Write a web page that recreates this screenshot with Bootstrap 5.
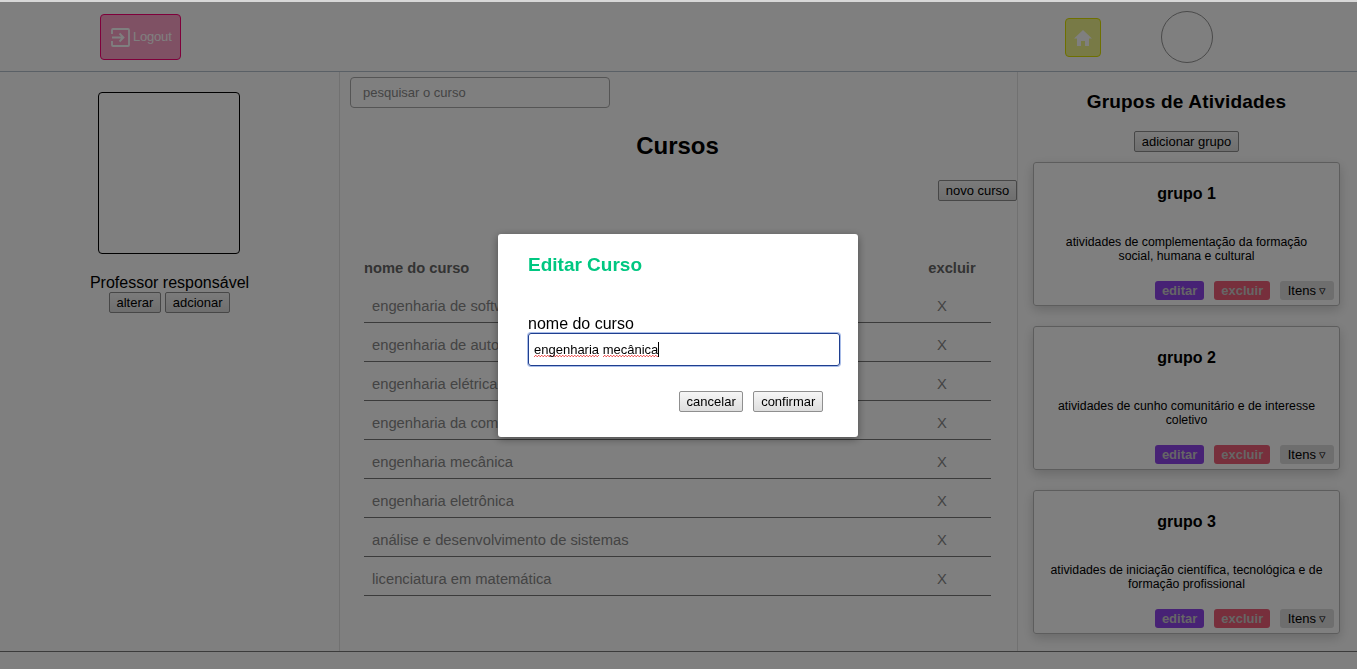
<!DOCTYPE html>
<html lang="pt-BR">
<head>
    <meta charset="UTF-8">
    <title>Cursos</title>
    <link href="https://cdn.jsdelivr.net/npm/bootstrap@5.3.2/dist/css/bootstrap.min.css" rel="stylesheet">
    <style>
        html, body { height: 100%; overflow: hidden; }
        body { font-family: "Liberation Sans", Arial, sans-serif; font-size: 16px; color: #000; background: #fff; }
        .top-edge { position: fixed; top: 0; left: 0; right: 0; height: 2px; background: #d8d8d8; z-index: 1060; }
        .page-top { height: 72px; padding-top: 2px; border-bottom: 1px solid #b4c0cc; }
        .logout-btn { margin: 12px 0 0 100px; width: 81px; height: 46px; border: 1px solid #ff0077; border-radius: 4px; background: #ffa3c8; color: #fff; font-size: 13px; letter-spacing: -.2px; padding: 0 0 0 10px; gap: 3px; }
        .home-btn { margin: 16px 0 0 884px; width: 36px; height: 39px; border: 1px solid #dde000; border-radius: 4px; background: #f0f48c; padding: 0; }
        .avatar-round { margin: 9px 0 0 60px; width: 52px; height: 52px; border: 1px solid #949494; border-radius: 50%; }
        .page-main { height: 579px; }
        .side-left { width: 340px; border-right: 1px solid #e2e2e2; padding-top: 20px; }
        .photo-box { width: 142px; height: 162px; border: 1px solid #000; border-radius: 4px; margin: 0 1px 20px 0; }
        .prof-name { line-height: 18px; }
        .plain-btn { font-family: "Liberation Sans", Arial, sans-serif; font-size: 13px; line-height: 15px; padding: 2px 6.7px; color: #000; border: 1px solid #8f8f8f; border-radius: 2px; background: linear-gradient(#f6f6f6, #dedede); }
        .center-col { width: 677px; padding: 5px 0 0 10px; }
        .search-box { width: 260px; height: 31px; font-size: 13px; border: 1px solid #aaa; border-radius: 4px; padding: 0 12px; color: #777; }
        .search-box::placeholder { color: #888; opacity: 1; }
        .page-title { font-size: 24px; font-weight: 700; line-height: 28px; text-align: center; margin: 24px 0 20px -12px; }
        .course-table { width: 627px; margin: 47px 0 0 14px; font-size: 14.75px; color: #888; }
        .course-table th { font-weight: 700; color: #666; font-size: 14.7px; height: 35px; border: 0; padding: 6px 0 0; vertical-align: middle; background: none; }
        .course-table td { height: 39px; padding: 8px 0 0 8px; border: 0; border-bottom: 1px solid #777; vertical-align: middle; color: #888; background: none; }
        .course-table .del-col { width: 98px; padding-left: 0; text-align: center; }
        .course-table th.del-col { padding-left: 20px; }
        .side-right { width: 340px; border-left: 1px solid #e2e2e2; padding: 0 17px 0 15px; }
        .side-title { font-size: 19px; font-weight: 700; line-height: 22px; letter-spacing: .2px; text-align: center; margin: 19px 0 16px; }
        .add-row { margin-bottom: 9px; }
        .group-box { height: 144px; border: 1px solid #bbb; border-radius: 3px; box-shadow: 0 4px 12px rgba(0,0,0,.18); margin-bottom: 20px; text-align: center; position: relative; }
        .group-name { font-size: 16px; font-weight: 700; line-height: 18px; margin: 22px 0 0; }
        .group-desc { font-size: 12.3px; line-height: 14px; height: 28px; margin: 32px 15px 0; }
        .group-btns { position: absolute; right: 5px; bottom: 5px; gap: 10px; }
        .mini-tag { font-size: 13px; line-height: 15px; padding: 2px 7px; border-radius: 3px; height: 19px; }
        .tag-edit { background: #8f45ea; color: #ccc; font-weight: 700; }
        .tag-del { background: #ef5f78; color: #ccc; font-weight: 700; }
        .tag-items { background: #dcdcdc; color: #000; padding: 2px 7.500px; }
        .page-bottom { border-top: 1px solid #777; height: 18px; }
        .edit-dialog { width: 360px; max-width: 360px; margin: 234px 0 0 498px; }
        .edit-box { height: 203px; border: 0; border-radius: 3px; padding: 19px 18px 0 30px; box-shadow: 0 2px 8px rgba(0,0,0,.4); }
        .edit-title { color: #00c781; font-size: 19px; font-weight: 700; line-height: 24px; margin: 0 0 38px; }
        .edit-label { line-height: 18px; margin: 0; display: block; color: #000; }
        .edit-field { width: 312px; height: 33px; font-size: 13px; line-height: 31px; padding: 0 5px; border: 1px solid #1f3f8f; border-radius: 3px; box-shadow: 0 0 0 1px #a9bde8; white-space: nowrap; color: #000; }
        .typo {
            background-image: linear-gradient(135deg, transparent 40%, #e55 40%, #e55 60%, transparent 60%), linear-gradient(45deg, transparent 40%, #e55 40%, #e55 60%, transparent 60%);
            background-size: 3px 2px; background-position: 0 100%, 1.500px 100%; background-repeat: repeat-x;
        }
        .caret-mark { border-right: 1px solid #000; }
        .edit-actions { margin: 25px 17px 0 0; gap: 10px; }
    </style>
</head>
<body>
<div class="top-edge"></div>

<div class="page-top d-flex align-items-start">
    <button class="logout-btn d-flex align-items-center">
        <svg width="19" height="19" viewBox="0 0 19 19" fill="none" stroke="#fff" stroke-width="1.800"><path d="M1 6V2a1 1 0 0 1 1-1h15a1 1 0 0 1 1 1v15a1 1 0 0 1-1 1H2a1 1 0 0 1-1-1v-4"/><path d="M1 9.500h11.500M8.500 5.500l4 4-4 4"/></svg>
        <span>Logout</span>
    </button>
    <button class="home-btn d-flex align-items-center justify-content-center">
        <svg width="18" height="16" viewBox="0 0 18 16" fill="#fff"><path d="M9 0 0 8.500h3V16h4v-5h4v5h4V8.500h3z"/></svg>
    </button>
    <div class="avatar-round"></div>
</div>

<div class="page-main d-flex">
    <div class="side-left d-flex flex-column align-items-center">
        <div class="photo-box"></div>
        <div class="prof-name">Professor responsável</div>
        <div class="d-flex gap-1">
            <button class="plain-btn">alterar</button>
            <button class="plain-btn">adcionar</button>
        </div>
    </div>

    <div class="center-col">
        <input class="search-box d-block" placeholder="pesquisar o curso">
        <h1 class="page-title">Cursos</h1>
        <div class="d-flex justify-content-end"><button class="plain-btn">novo curso</button></div>
        <table class="table course-table">
            <thead><tr><th>nome do curso</th><th class="del-col">excluir</th></tr></thead>
            <tbody id="courseRows"></tbody>
        </table>
    </div>

    <div class="side-right">
        <h2 class="side-title">Grupos de Atividades</h2>
        <div class="text-center add-row"><button class="plain-btn">adicionar grupo</button></div>
        <div id="groupList"></div>
    </div>
</div>
<div class="page-bottom"></div>

<div class="modal-backdrop fade show"></div>
<div class="modal d-block">
    <div class="modal-dialog edit-dialog">
        <div class="modal-content edit-box">
            <h2 class="edit-title">Editar Curso</h2>
            <label class="edit-label">nome do curso</label>
            <div class="edit-field"><span class="typo">engenharia</span> <span class="typo caret-mark">mecânica</span></div>
            <div class="d-flex justify-content-end edit-actions">
                <button class="plain-btn">cancelar</button>
                <button class="plain-btn">confirmar</button>
            </div>
        </div>
    </div>
</div>

<script src="https://cdn.jsdelivr.net/npm/bootstrap@5.3.2/dist/js/bootstrap.bundle.min.js"></script>
<script>
    const courses = [
        "engenharia de software", "engenharia de automação", "engenharia elétrica-eletrônica",
        "engenharia da computação", "engenharia mecânica", "engenharia eletrônica",
        "análise e desenvolvimento de sistemas", "licenciatura em matemática"
    ];
    const groups = [
        ["grupo 1", "atividades de complementação da formação social, humana e cultural"],
        ["grupo 2", "atividades de cunho comunitário e de interesse coletivo"],
        ["grupo 3", "atividades de iniciação científica, tecnológica e de formação profissional"]
    ];

    document.getElementById("courseRows").innerHTML = courses.map(c =>
        `<tr><td>${c}</td><td class="del-col">X</td></tr>`).join("");

    document.getElementById("groupList").innerHTML = groups.map(g => `
        <div class="group-box">
            <h3 class="group-name">${g[0]}</h3>
            <p class="group-desc">${g[1]}</p>
            <div class="group-btns d-flex">
                <span class="mini-tag tag-edit">editar</span>
                <span class="mini-tag tag-del">excluir</span>
                <span class="mini-tag tag-items">Itens ▿</span>
            </div>
        </div>`).join("");
</script>
</body>
</html>
